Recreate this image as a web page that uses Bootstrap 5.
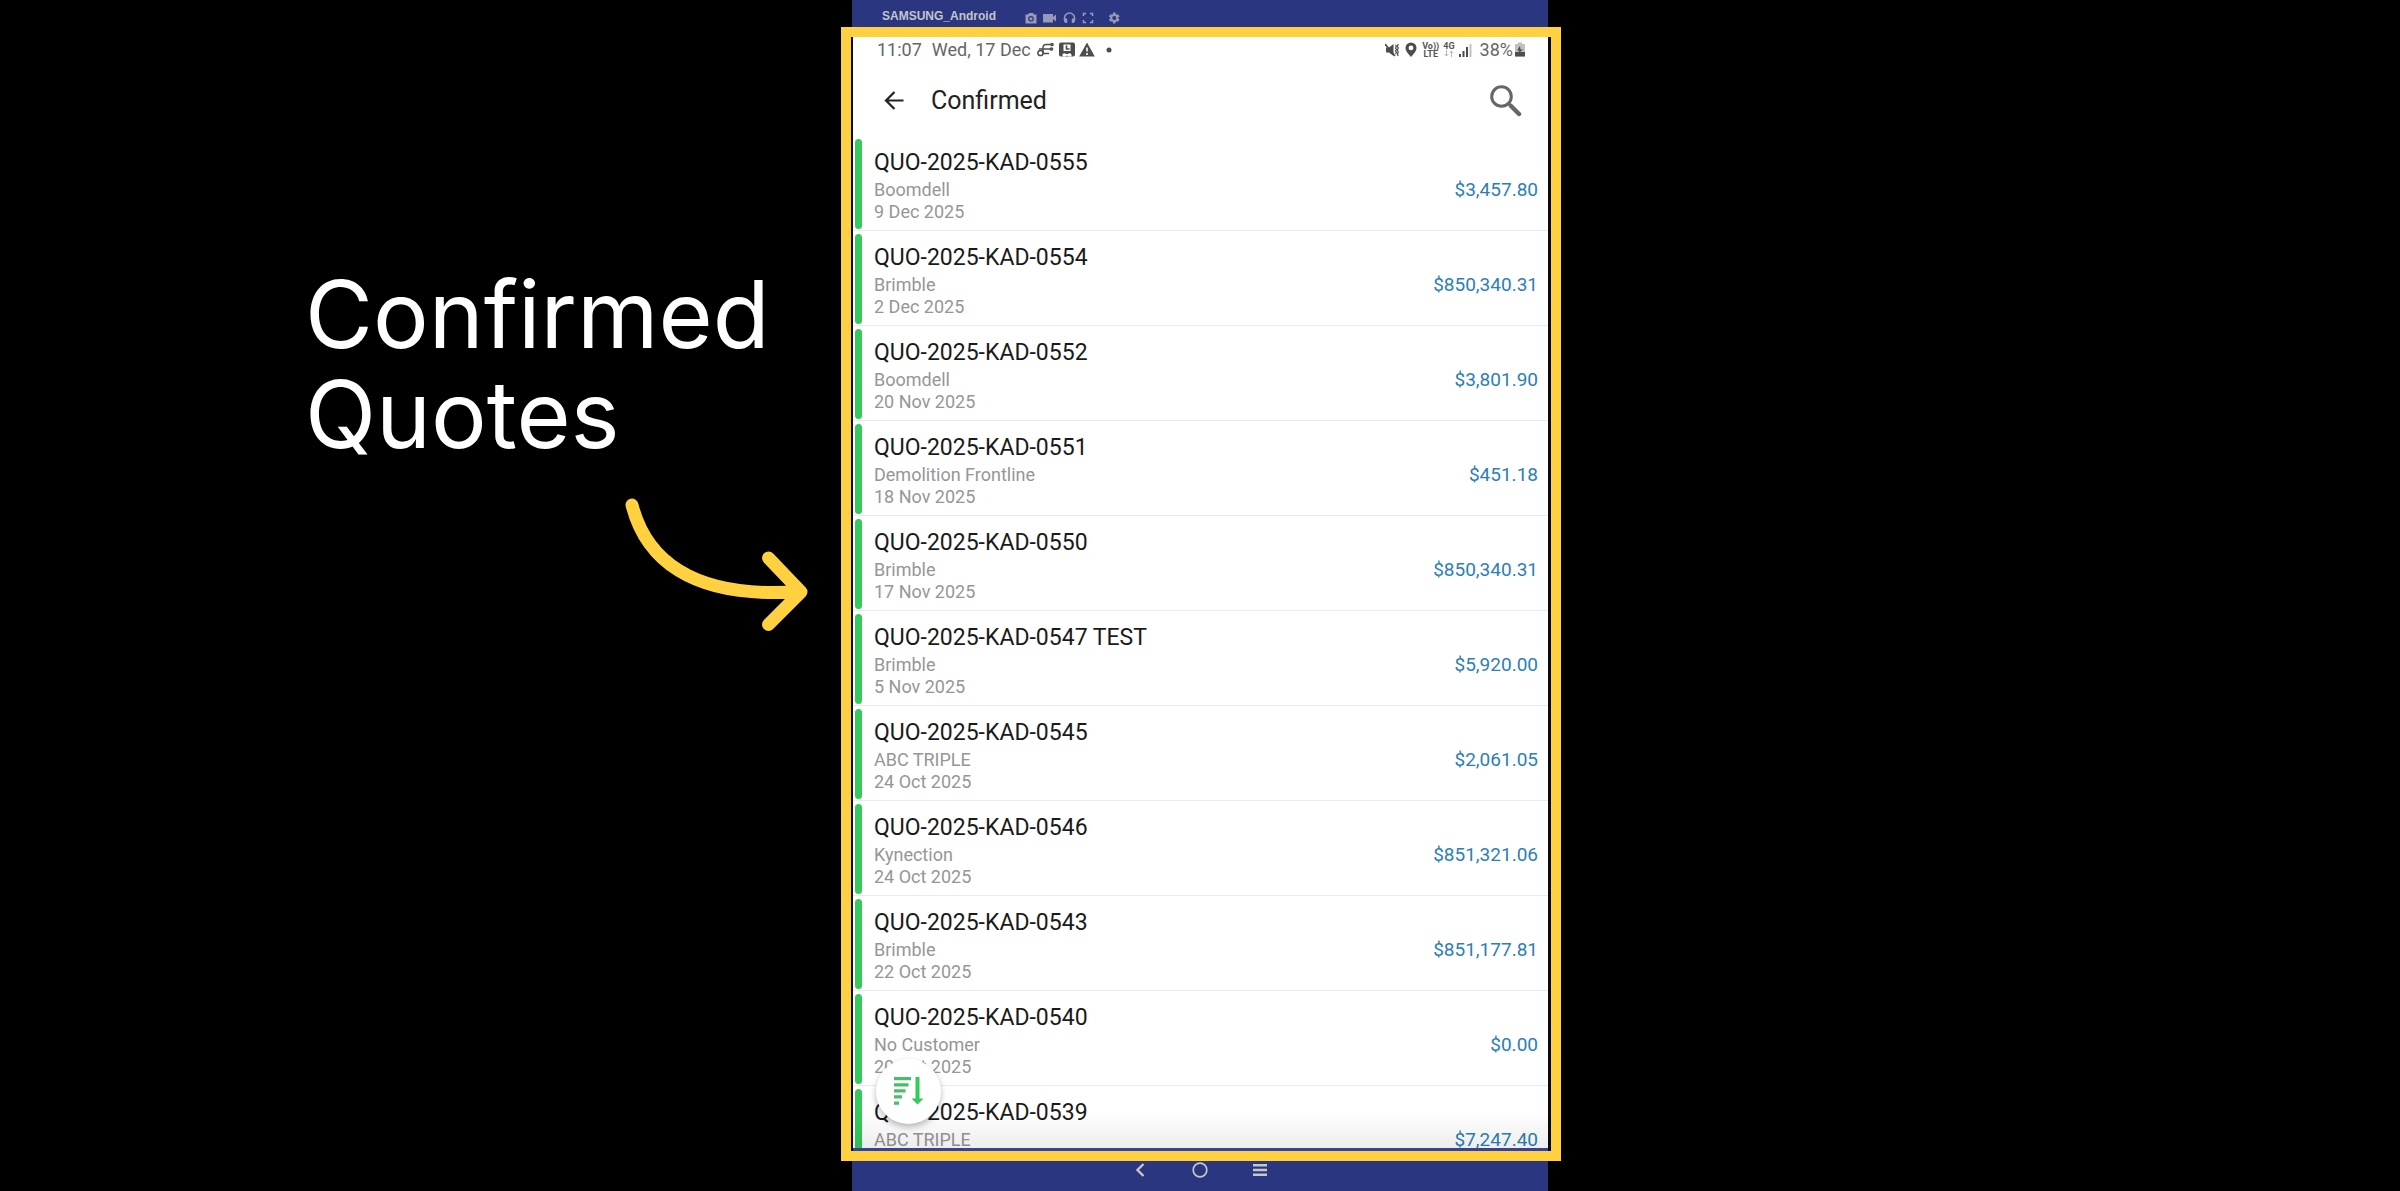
<!DOCTYPE html>
<html lang="en">
<head>
<meta charset="utf-8">
<meta name="viewport" content="width=device-width, initial-scale=1">
<title>Confirmed Quotes</title>
<link href="https://cdn.jsdelivr.net/npm/bootstrap@5.3.0/dist/css/bootstrap.min.css" rel="stylesheet">
<style>
  body { background: #000; font-family: Roboto, "Liberation Sans", sans-serif; }
  .stage { display: grid; grid-template-columns: 841fr 720fr 839fr; height: 100vh; }
  .callout { padding: 264px 32px 0 0; }
  .callout-title { font-family: Inter, "Liberation Sans", sans-serif; font-size: 93px; font-weight: 400; line-height: 100px; color: #fff; width: 504px; }
  .callout-arrow { width: 184px; height: 134px; margin-top: 34px; }
  .device-bar { background: #2a367f; margin: 0 13px 0 11px; color: #a3a5bf; }
  .device-top { height: 28px; padding: 7px 30px 0; font: 700 12px/18px "Liberation Sans", sans-serif; color: #c3c4cc; }
  .device-top .device-name { margin-right: 29px; }
  .device-top svg { color: #9699b8; margin-right: 6px; margin-top: 5px; }
  .device-nav { height: 31px; padding-bottom: 12px; gap: 40px; }
  .device-nav button, .app-head button { background: none; border: 0; padding: 0; display: flex; }
  .device-nav button { width: 20px; justify-content: center; color: #c8c6c8; }
  .frame { border: 10px solid #ffd141; padding: 0 3px 0 2px; background: #070b0c; min-height: 0; }
  .screen { background: #fff; border-bottom: 3px solid #35429c; min-height: 0; }
  .status { height: 24px; padding: 1px 23px 0 24px; font-size: 18px; line-height: 24px; color: #666; }
  .status svg { color: #4d4d4d; }
  .status-date { margin-left: 10px; }
  .net { font: 700 9px/8px Roboto, sans-serif; color: #555; text-align: center; }
  .app-head { height: 75px; padding: 5px 26px 0 31px; color: #222; }
  .app-head h2 { font-size: 25px; line-height: 32px; font-weight: 400; margin: 0 0 0 27px; }
  .quotes { min-height: 0; }
  .quotes::after { content: ""; position: absolute; inset: auto 0 0 0; height: 36px; background: linear-gradient(transparent, rgba(0,0,0,.07)); pointer-events: none; }
  .quote { height: 95px; padding: 3px 10px 1px 2px; border-bottom: 1px solid #ebebeb; }
  .quote-bar { width: 7px; border-radius: 4px; background: #37c95b; }
  .quote-text { padding: 7px 0 0 12px; }
  .quote-no { font-size: 23px; line-height: 33px; color: #1a1a1a; }
  .quote-sub { font-size: 18px; line-height: 22px; color: #969696; }
  .quote-sum { font-size: 19px; line-height: 24px; color: #2c80b4; padding-top: 12px; }
  .fab { position: absolute; left: 23px; bottom: 24px; width: 65px; height: 65px; border: 0; border-radius: 50%; background: #fff; box-shadow: 0 3px 6px rgba(0,0,0,.28); z-index: 2; padding: 0; }
</style>
</head>
<body>
<div class="stage overflow-hidden">
  <section class="callout d-flex flex-column align-items-end">
    <h1 class="callout-title mb-0">Confirmed<br>Quotes</h1>
    <svg class="callout-arrow" viewBox="625 498 184 134" fill="none" stroke="#ffd141" stroke-width="13" stroke-linecap="round" stroke-linejoin="round" aria-hidden="true"><path d="M632 505C645 556 688 600 800 591.500M768.500 558L801 592L768.500 624.500"/></svg>
  </section>

  <main class="d-flex flex-column overflow-hidden">
    <div class="device-bar device-top d-flex align-items-start">
      <span class="device-name">SAMSUNG_Android</span>
      <svg width="12" height="12" viewBox="0 0 12 12" fill="currentColor"><path fill-rule="evenodd" d="M4 1h4l1 1.500h2.500V11.500H.5V2.500H3zM6 4a2.800 2.800 0 1 0 0 5.600A2.800 2.800 0 0 0 6 4zm0 1.200a1.600 1.600 0 1 1 0 3.200 1.600 1.600 0 0 1 0-3.200z"/></svg>
      <svg width="14" height="12" viewBox="0 0 14 12" fill="currentColor"><path d="M0 2h10v3l3-2.500v7L10 7v3.500H0z"/></svg>
      <svg width="13" height="12" viewBox="0 0 13 12"><path d="M1.500 8V6a5 5 0 0 1 10 0v2" fill="none" stroke="currentColor" stroke-width="1.600"/><path d="M1 6.500h3.200V11H2.500L1 9.500zM8.800 6.500H12v3L10.500 11H8.800z" fill="currentColor"/></svg>
      <svg width="12" height="12" viewBox="0 0 12 12" fill="none" stroke="currentColor" stroke-width="1.600"><path d="M1.500 4V1.500H4M8 1.500h2.500V4M10.500 8v2.500H8M4 10.500H1.500V8"/></svg>
      <svg class="ms-2" width="13" height="12" viewBox="0 0 24 24" fill="currentColor"><path d="M19.400 13c0-.3.100-.6.100-1s0-.7-.1-1l2.300-1.700c.2-.2.300-.5.100-.7l-2.200-3.800c-.1-.2-.4-.3-.6-.2l-2.700 1c-.6-.4-1.200-.7-1.900-1L14 1.700c0-.3-.2-.5-.5-.5h-4c-.3 0-.5.200-.5.500l-.4 2.900c-.7.300-1.300.600-1.900 1L4 4.600c-.2-.1-.5 0-.6.200L1.200 8.600c-.1.200-.1.500.1.700L3.700 11c0 .3-.1.700-.1 1s0 .7.100 1l-2.400 1.700c-.2.200-.2.500-.1.700l2.200 3.800c.1.200.4.300.6.200l2.700-1c.6.400 1.200.8 1.900 1l.4 2.900c0 .3.200.5.500.5h4c.3 0 .5-.2.500-.5l.4-2.900c.7-.2 1.300-.6 1.900-1l2.700 1c.2.100.5 0 .6-.2l2.200-3.800c.1-.2.100-.5-.1-.7zM11.500 16a4 4 0 1 1 0-8 4 4 0 0 1 0 8z"/></svg>
    </div>

    <div class="frame d-flex flex-column flex-grow-1">
      <div class="screen d-flex flex-column flex-grow-1 overflow-hidden">
        <div class="status d-flex align-items-center flex-shrink-0">
          <span>11:07</span><span class="status-date">Wed, 17 Dec</span>
          <svg class="ms-1 me-1" width="20" height="16" viewBox="-4 0 20 16" fill="none" stroke="#4d4d4d" stroke-width="1.500"><circle cx="1.500" cy="11" r="2.600"/><path d="M4 11.500V6a3 3 0 0 1 3-3.500h5M0 7h11M4 11.500h6"/><circle cx="13" cy="2.500" r="1.100"/><circle cx="12.500" cy="7" r="1.100"/></svg>
          <svg width="16" height="15" viewBox="0 0 16 15"><rect width="16" height="14" y=".5" rx="2" fill="#4d4d4d"/><path d="M4.500 2.500h7v6.500h-7zM3.500 14.500v-2c1-1.500 2.500-1.500 3.500-.5h2c1-1 2.500-1 3.500.5v2h-3l-1.500-1-1.500 1z" fill="#fff"/><path d="M7.500 3.500v3.500h3" fill="none" stroke="#4d4d4d" stroke-width="1.700"/></svg>
          <svg class="ms-1" width="16" height="15" viewBox="0 0 16 15"><path d="M8 .5L15.800 14.500H.2z" fill="#4d4d4d"/><path d="M8 5.500v4M8 11v2" stroke="#fff" stroke-width="1.600"/></svg>
          <svg class="ms-2" width="12" height="6" viewBox="0 0 12 6"><circle cx="6" cy="3" r="2.500" fill="#4d4d4d"/></svg>
          <svg class="ms-auto" width="15" height="14" viewBox="0 0 15 14"><path d="M1 4.500h3L8.500 1v12L4 9.500H1z" fill="#4d4d4d"/><path d="M0 1l10 12" stroke="#4d4d4d" stroke-width="1.700"/><path d="M10.500 2l1 1.500-1 1.500 1 1.500-1 1.500 1 1.500-1 1.500M13.300 1l-1 2 1 2-1 2 1 2-1 2 1 2" fill="none" stroke="#4d4d4d" stroke-width="1.200"/></svg>
          <svg class="mx-1" width="14" height="15" viewBox="-1 0 14 15"><path fill-rule="evenodd" fill="#4d4d4d" d="M6 .5A5.500 5.500 0 0 0 .5 6c0 3.500 5.500 9 5.500 9s5.500-5.500 5.500-9A5.500 5.500 0 0 0 6 .5zM6 3.500a2.400 2.400 0 1 1 0 4.800 2.400 2.400 0 0 1 0-4.800z"/></svg>
          <span class="net">Vo))<br>LTE</span>
          <span class="net mx-1">4G<br><svg class="d-block mx-auto" width="10" height="7" viewBox="0 0 10 7" fill="none" stroke="#b5b5b5"><path d="M2.500 0v6M.5 4l2 2 2-2M7.500 7V1M5.500 3l2-2 2 2"/></svg></span>
          <svg class="me-2" width="13" height="14" viewBox="0 0 13 14" fill="#4d4d4d"><path d="M0 11h2v3H0zM3.500 8h2v6h-2zM7 4h2v10H7z"/><path fill="#c2c2c2" d="M10.500 1h2v13h-2z"/></svg>
          <span>38%</span>
          <svg width="12" height="15" viewBox="-2 0 12 15"><path d="M3 .5h4V2h3v12.500H0V2h3z" fill="#c0c0c0"/><path d="M0 10h10v4.500H0z" fill="#4d4d4d"/><path d="M5 4L2 8.500h2V11l4-3.500H5.500z" fill="#4d4d4d"/></svg>
        </div>

        <header class="app-head d-flex align-items-center flex-shrink-0">
          <button type="button" aria-label="Back"><svg width="20" height="20" viewBox="0 0 20 20" fill="none" stroke="#222" stroke-width="2.200"><path d="M19.500 9.500H2.500M10.500 1l-8.500 8.500 8.500 8.500"/></svg></button>
          <h2>Confirmed</h2>
          <button type="button" class="ms-auto" aria-label="Search"><svg width="32" height="32" viewBox="0 0 32 32" fill="none" stroke="#666"><circle cx="11.500" cy="11.500" r="9.800" stroke-width="3"/><path d="M18.500 18.500l3 3" stroke-width="2.500"/><path d="M21 21l8 8" stroke-width="4.500" stroke-linecap="round"/></svg></button>
        </header>

        <div class="quotes position-relative flex-grow-1 overflow-hidden">
          <ul class="list-unstyled mb-0" id="quoteList"></ul>
          <button type="button" class="fab d-flex align-items-center justify-content-center" aria-label="Sort"><svg width="30" height="30" viewBox="0 0 30 30"><path d="M0 1h17v3.200H0zM0 7.200h14.500v3.200H0zM0 13.300h11.500v3.200H0zM0 19.300h8v3.200H0zM0 25.500h5v3.200H0z" fill="#4dbb6c"/><path d="M21.500 1h4v21.500h4l-6 6-6-6h4z" fill="#37c95b"/></svg></button>
        </div>
      </div>
    </div>

    <nav class="device-bar device-nav d-flex align-items-center justify-content-center">
      <button type="button" aria-label="Back"><svg width="10" height="14" viewBox="0 0 10 14" fill="none" stroke="currentColor" stroke-width="2.400"><path d="M8.500 1L2.500 7l6 6"/></svg></button>
      <button type="button" aria-label="Home"><svg width="16" height="16" viewBox="0 0 16 16" fill="none" stroke="currentColor" stroke-width="1.700"><circle cx="8" cy="8" r="6.800"/></svg></button>
      <button type="button" aria-label="Menu"><svg width="14" height="14" viewBox="0 0 14 14" stroke="currentColor" stroke-width="2.400"><path d="M0 2.200h14M0 7h14M0 11.800h14"/></svg></button>
    </nav>
  </main>
</div>

<script>
  const quotes = [
    ["QUO-2025-KAD-0555", "Boomdell", "9 Dec 2025", "$3,457.80"],
    ["QUO-2025-KAD-0554", "Brimble", "2 Dec 2025", "$850,340.31"],
    ["QUO-2025-KAD-0552", "Boomdell", "20 Nov 2025", "$3,801.90"],
    ["QUO-2025-KAD-0551", "Demolition Frontline", "18 Nov 2025", "$451.18"],
    ["QUO-2025-KAD-0550", "Brimble", "17 Nov 2025", "$850,340.31"],
    ["QUO-2025-KAD-0547 TEST", "Brimble", "5 Nov 2025", "$5,920.00"],
    ["QUO-2025-KAD-0545", "ABC TRIPLE", "24 Oct 2025", "$2,061.05"],
    ["QUO-2025-KAD-0546", "Kynection", "24 Oct 2025", "$851,321.06"],
    ["QUO-2025-KAD-0543", "Brimble", "22 Oct 2025", "$851,177.81"],
    ["QUO-2025-KAD-0540", "No Customer", "20 Oct 2025", "$0.00"],
    ["QUO-2025-KAD-0539", "ABC TRIPLE", "", "$7,247.40"]
  ];
  document.getElementById("quoteList").innerHTML = quotes.map(([no, who, date, sum]) => `
    <li class="quote d-flex">
      <span class="quote-bar"></span>
      <div class="quote-text flex-grow-1">
        <div class="quote-no">${no}</div>
        <div class="quote-sub">${who}</div>
        <div class="quote-sub">${date}</div>
      </div>
      <div class="quote-sum align-self-center">${sum}</div>
    </li>`).join("");
</script>
<script src="https://cdn.jsdelivr.net/npm/bootstrap@5.3.0/dist/js/bootstrap.bundle.min.js"></script>
</body>
</html>
